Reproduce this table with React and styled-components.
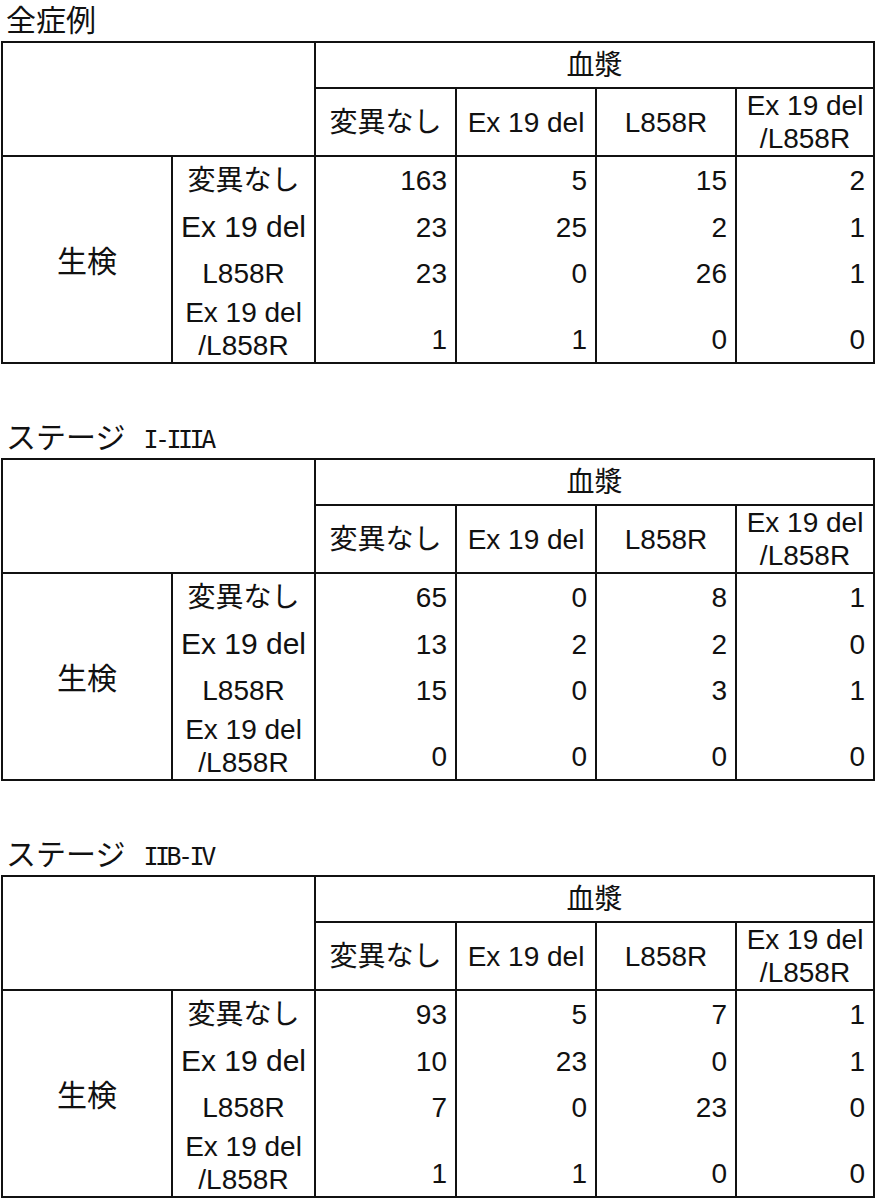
import styled, { createGlobalStyle } from "styled-components";

const GlobalStyle = createGlobalStyle`
  html, body {
    margin: 0;
    padding: 0;
    background: #ffffff;
  }

  body {
    color: #111111;
    font-family: "Liberation Sans", "Noto Sans CJK JP", sans-serif;
  }
`;

const Page = styled.div`
  display: flex;
  flex-direction: column;
  gap: 53px;
  width: 883px;
`;

const Section = styled.section`
  display: flex;
  flex-direction: column;
`;

const Title = styled.h2`
  height: 41px;
  margin: 0;
  padding: 0 0 0 6px;
  box-sizing: border-box;
  font-family: "Noto Sans CJK JP", sans-serif;
  font-size: 30px;
  font-weight: 400;
  line-height: 37px;
  white-space: nowrap;
`;

const Stage = styled.span`
  margin-left: 18px;
  font-family: "DejaVu Sans Mono", monospace;
  font-size: 25px;
  letter-spacing: -3.5px;
`;

const Table = styled.table`
  width: 874px;
  margin-left: 1px;
  border-collapse: collapse;
  table-layout: fixed;
  font-size: 28px;
  line-height: 33px;
`;

const Row = styled.tr`
  height: ${(p) => p.$h}px;
`;

const HeadCell = styled.th`
  border: 2px solid #111111;
  padding: 0;
  font-weight: 400;
  text-align: center;
  vertical-align: middle;
`;

const LabelCell = styled.td`
  border-left: 2px solid #111111;
  border-right: 2px solid #111111;
  padding: ${(p) => p.$pad || 0}px 0 0 0;
  text-align: center;
  vertical-align: middle;
  font-size: ${(p) => p.$size || 28}px;
`;

const NumCell = styled.td`
  border-left: 2px solid #111111;
  border-right: 2px solid #111111;
  padding: 0 8px 6px 0;
  text-align: right;
  vertical-align: bottom;
`;

const Body = styled.tbody`
  border: 2px solid #111111;
`;

const plasma = ["変異なし", "Ex 19 del", "L858R", "Ex 19 del\n/L858R"];
const heights = [47, 47, 46, 67];

const sections = [
  {
    title: "全症例",
    rows: [
      [163, 5, 15, 2],
      [23, 25, 2, 1],
      [23, 0, 26, 1],
      [1, 1, 0, 0],
    ],
  },
  {
    title: "ステージ",
    stage: "I-IIIA",
    rows: [
      [65, 0, 8, 1],
      [13, 2, 2, 0],
      [15, 0, 3, 1],
      [0, 0, 0, 0],
    ],
  },
  {
    title: "ステージ",
    stage: "IIB-IV",
    rows: [
      [93, 5, 7, 1],
      [10, 23, 0, 1],
      [7, 0, 23, 0],
      [1, 1, 0, 0],
    ],
  },
];

function Lines({ text }) {
  const parts = text.split("\n");
  return parts.map((part, i) => (
    <span key={i}>
      {part}
      {i < parts.length - 1 && <br />}
    </span>
  ));
}

function CrossTable({ rows }) {
  return (
    <Table>
      <colgroup>
        <col style={{ width: 170 }} />
        <col style={{ width: 143 }} />
        <col style={{ width: 141 }} />
        <col style={{ width: 140 }} />
        <col style={{ width: 140 }} />
        <col style={{ width: 138 }} />
      </colgroup>
      <thead>
        <Row $h={46}>
          <HeadCell rowSpan={2} colSpan={2} />
          <HeadCell colSpan={4}>血漿</HeadCell>
        </Row>
        <Row $h={67}>
          {plasma.map((label) => (
            <HeadCell key={label}>
              <Lines text={label} />
            </HeadCell>
          ))}
        </Row>
      </thead>
      <Body>
        {rows.map((values, i) => (
          <Row key={i} $h={heights[i]}>
            {i === 0 && (
              <LabelCell rowSpan={4} $size={30} $pad={4}>
                生検
              </LabelCell>
            )}
            <LabelCell $size={i === 1 ? 30 : 28}>
              <Lines text={plasma[i]} />
            </LabelCell>
            {values.map((v, j) => (
              <NumCell key={j}>{v}</NumCell>
            ))}
          </Row>
        ))}
      </Body>
    </Table>
  );
}

export default function App() {
  return (
    <>
      <GlobalStyle />
      <Page>
        {sections.map((s, i) => (
          <Section key={i}>
            <Title>
              {s.title}
              {s.stage && <Stage>{s.stage}</Stage>}
            </Title>
            <CrossTable rows={s.rows} />
          </Section>
        ))}
      </Page>
    </>
  );
}
